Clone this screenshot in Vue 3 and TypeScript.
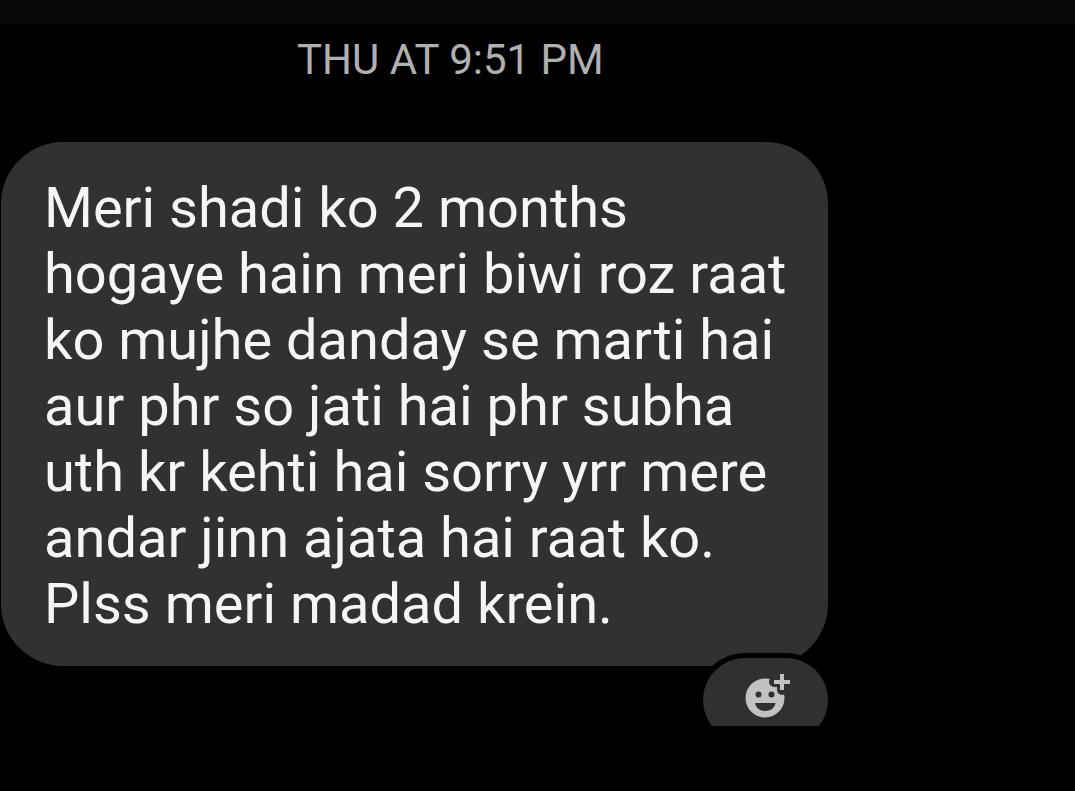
<script setup lang="ts">
const timestamp: string = 'THU AT 9:51 PM'
const lines: string[] = [
  'Meri shadi ko 2 months',
  'hogaye hain meri biwi roz raat',
  'ko mujhe danday se marti hai',
  'aur phr so jati hai phr subha',
  'uth kr kehti hai sorry yrr mere',
  'andar jinn ajata hai raat ko.',
  'Plss meri madad krein.',
]
</script>

<template>
  <main class="chat">
    <div class="topbar"></div>
    <div class="thread">
      <time class="stamp">{{ timestamp }}</time>
      <article class="bubble">
        <p class="message">
          <span v-for="line in lines" :key="line" class="line">{{ line }}</span>
        </p>
        <div class="reaction">
          <button class="react" type="button" aria-label="Add reaction">
            <svg class="smile" viewBox="-7 0 54 48" aria-hidden="true">
              <circle cx="20" cy="25" r="19.5" fill="#c2c2c2" />
              <circle cx="13.5" cy="21.5" r="3" fill="#303030" />
              <circle cx="26.5" cy="21.5" r="3" fill="#303030" />
              <path d="M10 30h20.500c-1 5-5 8-10.200 8s-9.300-3-10.300-8z" fill="#303030" />
              <path d="M37 1v16M29 9h16" stroke="#303030" stroke-width="10" stroke-linecap="round" />
              <path d="M37 1v16M29 9h16" stroke="#c2c2c2" stroke-width="4" />
            </svg>
          </button>
        </div>
      </article>
    </div>
  </main>
</template>

<style>
body {
  margin: 0;
  background: #000;
}
</style>

<style scoped>
.chat {
  min-height: 100vh;
  background: #000;
  font-family: Roboto, "Liberation Sans", sans-serif;
}
.topbar {
  height: 24px;
  background: #070707;
}
.thread {
  display: flex;
  flex-direction: column;
  width: 77%;
  padding-left: 1px;
  box-sizing: border-box;
}
.stamp {
  margin: 12px 0 58px 72px;
  text-align: center;
  font-size: 42px;
  line-height: 48px;
  color: #b0b0b0;
}
.bubble {
  position: relative;
  padding: 33px 40px 29px 43px;
  border-radius: 62px;
  background: #313131;
}
.message {
  margin: 0;
  color: #f5f5f5;
  font-size: 56px;
  line-height: 66px;
}
.line {
  display: block;
  white-space: nowrap;
}
.reaction {
  position: absolute;
  right: -5px;
  top: 100%;
  height: 68px;
  margin-top: -13px;
  padding: 5px 5px 0;
  overflow: hidden;
}
.react {
  display: flex;
  align-items: flex-start;
  justify-content: center;
  width: 125px;
  height: 84px;
  padding: 15px 0 0;
  border: 0;
  border-radius: 42px;
  background: #303030;
  box-shadow: 0 0 0 5px #000;
}
.smile {
  width: 54px;
  height: 48px;
}
</style>
